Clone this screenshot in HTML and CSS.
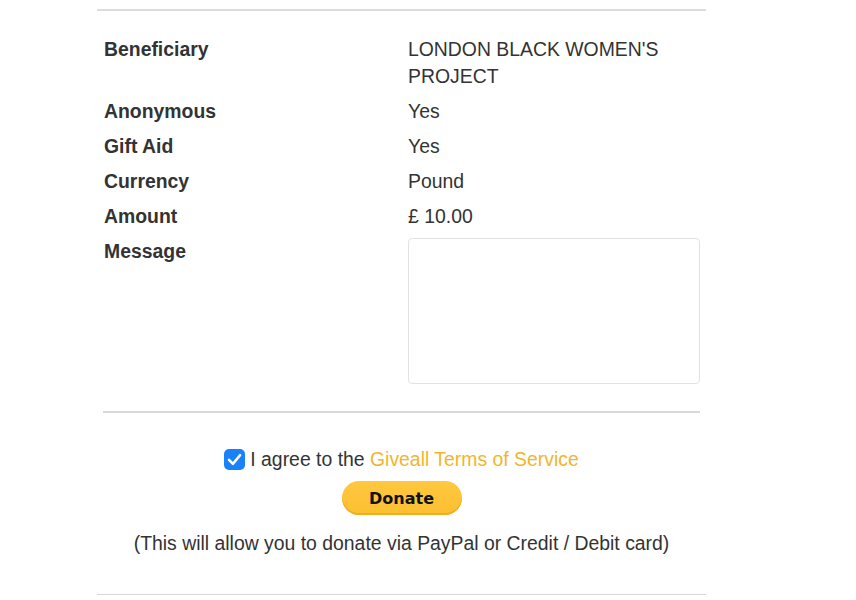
FILE: index.html
```html
<!DOCTYPE html>
<html lang="en">
<head>
<meta charset="utf-8">
<title>Donation summary</title>
<link rel="stylesheet" href="styles.css">
</head>
<body>
<div class="panel">
  <div class="details">
    <div class="label">Beneficiary</div>
    <div class="value">LONDON BLACK WOMEN'S PROJECT</div>
    <div class="label">Anonymous</div>
    <div class="value">Yes</div>
    <div class="label">Gift Aid</div>
    <div class="value">Yes</div>
    <div class="label">Currency</div>
    <div class="value">Pound</div>
    <div class="label">Amount</div>
    <div class="value">£ 10.00</div>
    <div class="label">Message</div>
    <div class="value"><textarea class="message"></textarea></div>
  </div>
  <hr class="sep">
  <div class="actions">
    <label class="agree">
      <span class="check"><svg viewBox="0 0 21 21" width="21" height="21"><path d="M5 10.8 L9 14.8 L16 6.2" fill="none" stroke="#fff" stroke-width="2.6" stroke-linecap="round" stroke-linejoin="round"/></svg></span>
      <span>I agree to the <a class="tos" href="#">Giveall Terms of Service</a></span>
    </label>
    <button class="donate" type="button">Donate</button>
    <p class="note">(This will allow you to donate via PayPal or Credit / Debit card)</p>
  </div>
</div>
</body>
</html>
```
FILE: styles.css
```css
html, body {
  margin: 0;
  padding: 0;
  background: #fff;
}
body {
  font-family: "Liberation Sans", Arial, sans-serif;
  font-size: 19.4px;
  color: #333;
}
.panel {
  margin: 9px 0 0 97px;
  width: 609px;
  border-top: 2px solid #dcdcdc;
  border-bottom: 1px solid #d6d6d6;
}
.details {
  display: grid;
  grid-template-columns: 304px 1fr;
  row-gap: 8px;
  padding: 25px 6px 0 7px;
  line-height: 27px;
}
.label {
  font-weight: bold;
  color: #333;
}
.value {
  color: #333;
}
.message {
  display: block;
  box-sizing: border-box;
  width: 292px;
  height: 146px;
  margin: 0;
  border: 1px solid #e2e2e2;
  border-radius: 4px;
  resize: none;
  background: #fff;
}
.sep {
  margin: 27px 6px 0 6px;
  border: 0;
  border-top: 2px solid #d9d9d9;
  height: 0;
}
.actions {
  display: flex;
  flex-direction: column;
  align-items: center;
  padding: 33px 0 37px 0;
  line-height: 27px;
}
.agree {
  display: flex;
  align-items: center;
  gap: 5px;
}
.check {
  display: block;
  width: 21px;
  height: 21px;
  border-radius: 5px;
  background: #1a82f8;
}
.check svg {
  display: block;
}
.tos {
  color: #f3b52a;
  text-decoration: none;
}
.donate {
  margin-top: 8px;
  width: 120px;
  height: 34px;
  border: 0;
  border-radius: 17px;
  background: linear-gradient(#ffc83f, #fcbf32);
  box-shadow: inset 0 -2px 0 #f1ad1f;
  font-family: "DejaVu Sans", Verdana, sans-serif;
  font-weight: bold;
  font-size: 16px;
  color: #111;
  padding: 0;
}
.note {
  margin: 15px 0 0 0;
  line-height: 27px;
}
```
